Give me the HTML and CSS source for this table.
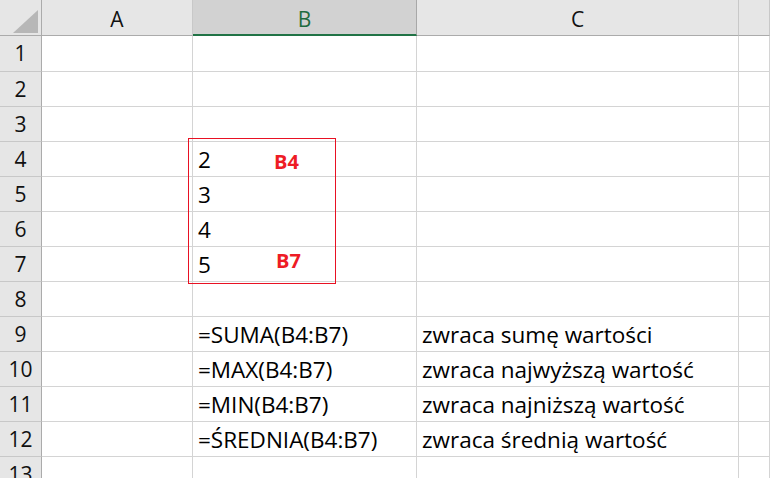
FILE: index.html
```html
<!DOCTYPE html>
<html lang="pl">
<head>
<meta charset="utf-8">
<link rel="stylesheet" href="styles.css">
</head>
<body>
<div class="sheet">
  <div class="grid">
    <div class="corner"><svg class="tri" width="26" height="24" viewBox="0 0 26 24"><polygon points="0,23 25,0 25,23" fill="#b7b7b7"/></svg></div>
    <div class="colhead">A</div>
    <div class="colhead sel">B</div>
    <div class="colhead">C</div>
    <div class="colhead"></div>

    <div class="rowhead">1</div><div class="cell"></div><div class="cell"></div><div class="cell"></div><div class="cell"></div>
    <div class="rowhead">2</div><div class="cell"></div><div class="cell"></div><div class="cell"></div><div class="cell"></div>
    <div class="rowhead">3</div><div class="cell"></div><div class="cell"></div><div class="cell"></div><div class="cell"></div>
    <div class="rowhead">4</div><div class="cell"></div><div class="cell">2</div><div class="cell"></div><div class="cell"></div>
    <div class="rowhead">5</div><div class="cell"></div><div class="cell">3</div><div class="cell"></div><div class="cell"></div>
    <div class="rowhead">6</div><div class="cell"></div><div class="cell">4</div><div class="cell"></div><div class="cell"></div>
    <div class="rowhead">7</div><div class="cell"></div><div class="cell">5</div><div class="cell"></div><div class="cell"></div>
    <div class="rowhead">8</div><div class="cell"></div><div class="cell"></div><div class="cell"></div><div class="cell"></div>
    <div class="rowhead">9</div><div class="cell"></div><div class="cell">=SUMA(B4:B7)</div><div class="cell">zwraca sumę wartości</div><div class="cell"></div>
    <div class="rowhead">10</div><div class="cell"></div><div class="cell">=MAX(B4:B7)</div><div class="cell">zwraca najwyższą wartość</div><div class="cell"></div>
    <div class="rowhead">11</div><div class="cell"></div><div class="cell">=MIN(B4:B7)</div><div class="cell">zwraca najniższą wartość</div><div class="cell"></div>
    <div class="rowhead">12</div><div class="cell"></div><div class="cell">=ŚREDNIA(B4:B7)</div><div class="cell">zwraca średnią wartość</div><div class="cell"></div>
    <div class="rowhead">13</div><div class="cell"></div><div class="cell"></div><div class="cell"></div><div class="cell"></div>
  </div>
  <div class="range">
    <span class="label l4">B4</span>
    <span class="label l7">B7</span>
  </div>
</div>
</body>
</html>
```

FILE: styles.css
```css
html, body {
  margin: 0;
  padding: 0;
  background: #ffffff;
  overflow: hidden;
}
.sheet {
  position: relative;
  width: 770px;
  height: 478px;
  overflow: hidden;
  font-family: "Open Sans", "Noto Sans", sans-serif;
}
.grid {
  display: grid;
  grid-template-columns: 42px 151px 224px 322px 31px;
  grid-template-rows: 36px 36px repeat(12, 35px);
}
.corner {
  background: #e6e6e6;
  border-right: 1px solid #ababab;
  border-bottom: 1px solid #ababab;
  box-sizing: border-box;
  position: relative;
}
.tri {
  position: absolute;
  left: 13px;
  top: 10px;
}
.colhead {
  background: #e6e6e6;
  border-right: 1px solid #c8c8c8;
  border-bottom: 1px solid #ababab;
  box-sizing: border-box;
  display: flex;
  align-items: flex-start;
  justify-content: center;
  padding-top: 5px;
  font-size: 21px;
  line-height: 1.362;
  color: #111;
}
.colhead.sel {
  background: #d2d2d2;
  color: #1e6b3f;
  border-bottom: 2px solid #217346;
  border-right-color: #a8a8a8;
}
.rowhead {
  background: #e6e6e6;
  border-right: 1px solid #ababab;
  border-bottom: 1px solid #c8c8c8;
  box-sizing: border-box;
  display: flex;
  align-items: flex-start;
  justify-content: center;
  padding-top: 3px;
  font-size: 21px;
  line-height: 1.362;
  color: #111;
}
.cell {
  border-right: 1px solid #d4d4d4;
  border-bottom: 1px solid #d4d4d4;
  box-sizing: border-box;
  display: flex;
  align-items: flex-start;
  padding: 3px 0 0 5px;
  font-size: 22.5px;
  line-height: 1.362;
  color: #000;
  white-space: nowrap;
}
.range {
  position: absolute;
  left: 188px;
  top: 138px;
  width: 148px;
  height: 146px;
  border: 1px solid #e81123;
  box-sizing: border-box;
}
.label {
  position: absolute;
  color: #ee1c25;
  font-weight: bold;
  font-size: 20px;
  line-height: 1.362;
}
.l4 { left: 85px; top: 9px; }
.l7 { left: 87px; top: 108px; }
```
